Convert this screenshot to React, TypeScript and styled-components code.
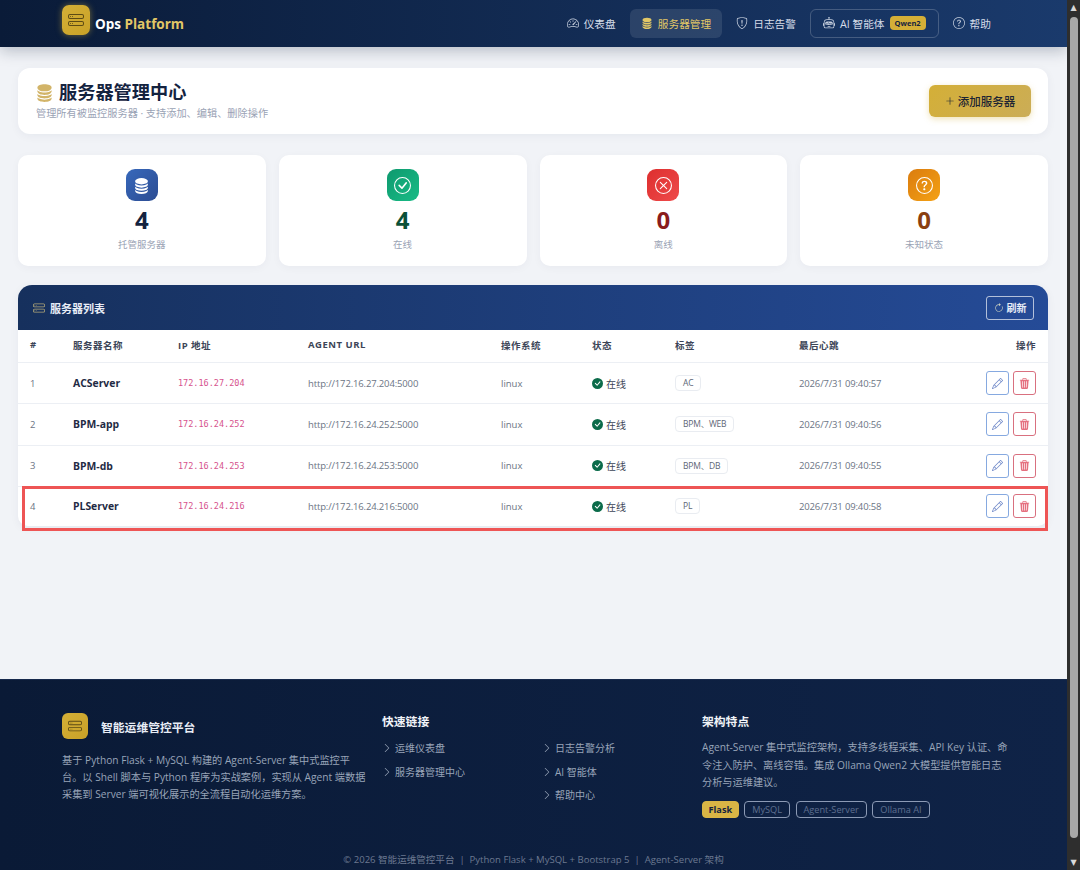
import React from "react";
import styled, { createGlobalStyle } from "styled-components";
import {
  BsArrowClockwise,
  BsCheckCircle,
  BsCheckCircleFill,
  BsChevronRight,
  BsDatabaseFill,
  BsHddStack,
  BsPencil,
  BsPlusLg,
  BsQuestionCircle,
  BsRobot,
  BsShieldExclamation,
  BsSpeedometer2,
  BsTrash3Fill,
  BsXCircle,
} from "react-icons/bs";

const FONT = `"Open Sans", "Noto Sans CJK SC", sans-serif`;

const stats = [
  { icon: <BsDatabaseFill />, bg: "linear-gradient(135deg, #2f62b8, #24468f)", color: "#14233f", value: 4, label: "托管服务器" },
  { icon: <BsCheckCircle />, bg: "linear-gradient(135deg, #059669, #10b981)", color: "#0b5138", value: 4, label: "在线" },
  { icon: <BsXCircle />, bg: "linear-gradient(135deg, #dc2626, #ef4444)", color: "#8a1c1c", value: 0, label: "离线" },
  { icon: <BsQuestionCircle />, bg: "linear-gradient(135deg, #d97706, #f59e0b)", color: "#8a3f10", value: 0, label: "未知状态" },
];

const servers = [
  { name: "ACServer", ip: "172.16.27.204", tag: "AC", time: "2026/7/31 09:40:57" },
  { name: "BPM-app", ip: "172.16.24.252", tag: "BPM、WEB", time: "2026/7/31 09:40:56" },
  { name: "BPM-db", ip: "172.16.24.253", tag: "BPM、DB", time: "2026/7/31 09:40:55" },
  { name: "PLServer", ip: "172.16.24.216", tag: "PL", time: "2026/7/31 09:40:58" },
];

const App = () => {
  return (
    <Shell>
      <GlobalStyle />
      <Page>
        <Navbar>
          <Brand>
            <LogoBox>
              <BsHddStack />
            </LogoBox>
            <BrandText>
              Ops <span>Platform</span>
            </BrandText>
          </Brand>
          <NavList>
            <NavItem>
              <BsSpeedometer2 /> 仪表盘
            </NavItem>
            <NavItem $active>
              <BsDatabaseFill /> 服务器管理
            </NavItem>
            <NavItem>
              <BsShieldExclamation /> 日志告警
            </NavItem>
            <NavItem $outlined>
              <BsRobot /> AI 智能体 <QwenBadge>Qwen2</QwenBadge>
            </NavItem>
            <NavItem>
              <BsQuestionCircle /> 帮助
            </NavItem>
          </NavList>
        </Navbar>

        <Main>
          <HeaderCard>
            <div>
              <PageTitle>
                <BsDatabaseFill /> 服务器管理中心
              </PageTitle>
              <PageSub>管理所有被监控服务器 · 支持添加、编辑、删除操作</PageSub>
            </div>
            <AddButton>
              <BsPlusLg /> 添加服务器
            </AddButton>
          </HeaderCard>

          <StatGrid>
            {stats.map((s) => (
              <StatCard key={s.label}>
                <StatIcon $bg={s.bg}>{s.icon}</StatIcon>
                <StatValue $color={s.color}>{s.value}</StatValue>
                <StatLabel>{s.label}</StatLabel>
              </StatCard>
            ))}
          </StatGrid>

          <TableCard>
            <TableHead>
              <TableTitle>
                <BsHddStack /> 服务器列表
              </TableTitle>
              <RefreshButton>
                <BsArrowClockwise /> 刷新
              </RefreshButton>
            </TableHead>
            <ColumnRow>
              <span>#</span>
              <span>服务器名称</span>
              <span>IP 地址</span>
              <span>AGENT URL</span>
              <span>操作系统</span>
              <span>状态</span>
              <span>标签</span>
              <span>最后心跳</span>
              <ActionHead>操作</ActionHead>
            </ColumnRow>
            {servers.map((s, i) => (
              <Row key={s.name} $last={i === servers.length - 1}>
                <Index>{i + 1}</Index>
                <ServerName>{s.name}</ServerName>
                <IpCode>{s.ip}</IpCode>
                <Numeric>http://{s.ip}:5000</Numeric>
                <Muted>linux</Muted>
                <Status>
                  <BsCheckCircleFill /> 在线
                </Status>
                <div>
                  <Tag>{s.tag}</Tag>
                </div>
                <Numeric>{s.time}</Numeric>
                <Actions>
                  <EditButton>
                    <BsPencil />
                  </EditButton>
                  <DeleteButton>
                    <BsTrash3Fill />
                  </DeleteButton>
                </Actions>
                {i === servers.length - 1 && <Highlight />}
              </Row>
            ))}
          </TableCard>
        </Main>

        <Footer>
          <FooterGrid>
            <div>
              <FooterBrand>
                <FooterLogo>
                  <BsHddStack />
                </FooterLogo>
                智能运维管控平台
              </FooterBrand>
              <FooterText>
                基于 Python Flask + MySQL 构建的 Agent-Server 集中式监控平
                <br />
                台。以 Shell 脚本与 Python 程序为实战案例，实现从 Agent 端数据
                <br />
                采集到 Server 端可视化展示的全流程自动化运维方案。
              </FooterText>
            </div>
            <div>
              <FooterHeading>快速链接</FooterHeading>
              <LinkGrid>
                <LinkColumn>
                  <FooterLink>
                    <BsChevronRight /> 运维仪表盘
                  </FooterLink>
                  <FooterLink>
                    <BsChevronRight /> 服务器管理中心
                  </FooterLink>
                </LinkColumn>
                <LinkColumn>
                  <FooterLink>
                    <BsChevronRight /> 日志告警分析
                  </FooterLink>
                  <FooterLink>
                    <BsChevronRight /> AI 智能体
                  </FooterLink>
                  <FooterLink>
                    <BsChevronRight /> 帮助中心
                  </FooterLink>
                </LinkColumn>
              </LinkGrid>
            </div>
            <div>
              <FooterHeading>架构特点</FooterHeading>
              <FeatureText>
                Agent-Server 集中式监控架构，支持多线程采集、API Key 认证、命
                <br />
                令注入防护、离线容错。集成 Ollama Qwen2 大模型提供智能日志
                <br />
                分析与运维建议。
              </FeatureText>
              <TechRow>
                <TechTag $solid>Flask</TechTag>
                <TechTag>MySQL</TechTag>
                <TechTag>Agent-Server</TechTag>
                <TechTag>Ollama AI</TechTag>
              </TechRow>
            </div>
          </FooterGrid>
          <Copyright>© 2026 智能运维管控平台 &nbsp;|&nbsp; Python Flask + MySQL + Bootstrap 5 &nbsp;|&nbsp; Agent-Server 架构</Copyright>
        </Footer>
      </Page>
      <Scrollbar>
        <ScrollArrow>▲</ScrollArrow>
        <ScrollThumb />
        <ScrollArrow>▼</ScrollArrow>
      </Scrollbar>
    </Shell>
  );
};

export default App;

const GlobalStyle = createGlobalStyle`
  html, body {
    margin: 0;
    padding: 0;
    height: 100%;
    overflow: hidden;
    background: #f1f3f7;
    font-family: ${FONT};
  }
`;

const Shell = styled.div`
  display: flex;
  width: 1080px;
  height: 870px;
  overflow: hidden;
`;

const Page = styled.div`
  width: 1067px;
  height: 870px;
  display: flex;
  flex-direction: column;
  overflow: hidden;
  background: #f1f3f7;
`;

const Navbar = styled.header`
  flex: none;
  height: 47px;
  box-sizing: border-box;
  padding: 0 65px 0 62px;
  display: flex;
  align-items: center;
  justify-content: space-between;
  background: linear-gradient(90deg, #0a1b38, #1a3a6c);
  box-shadow: 0 4px 14px rgba(10, 27, 56, 0.25);
  position: relative;
`;

const Brand = styled.div`
  display: flex;
  align-items: center;
  gap: 5px;
`;

const LogoBox = styled.div`
  width: 28px;
  height: 30px;
  margin-top: -7px;
  border-radius: 7px;
  background: linear-gradient(135deg, #d4af37, #c9a227);
  box-shadow: 0 0 6px rgba(212, 175, 55, 0.5);
  color: #5c4a14;
  display: flex;
  align-items: center;
  justify-content: center;
  font-size: 16px;
`;

const BrandText = styled.div`
  font-size: 13.5px;
  font-weight: 700;
  color: #fff;

  span {
    color: #e2c766;
  }
`;

const NavList = styled.nav`
  display: flex;
  align-items: center;
  gap: 3px;
  margin-top: -1px;
`;

const NavItem = styled.div<{ $active?: boolean; $outlined?: boolean }>`
  height: 29px;
  box-sizing: border-box;
  padding: 0 ${(p) => (p.$outlined ? "12px" : "10px")};
  display: flex;
  align-items: center;
  gap: 5px;
  border-radius: 6px;
  font-size: 10.7px;
  color: ${(p) => (p.$active ? "#e2c766" : "#d5dce8")};
  background: ${(p) => (p.$active ? "rgba(255, 255, 255, 0.1)" : "transparent")};
  border: 1px solid ${(p) => (p.$outlined ? "rgba(255, 255, 255, 0.2)" : "transparent")};

  svg {
    font-size: 12px;
    color: ${(p) => (p.$active ? "#e2c766" : "#c5cedd")};
  }
`;

const QwenBadge = styled.span`
  background: #d4af37;
  color: #14233f;
  font-size: 7.5px;
  font-weight: 700;
  padding: 2px 5px;
  border-radius: 4px;
`;

const Main = styled.main`
  flex: none;
  height: 632px;
  box-sizing: border-box;
  padding: 21px 19px 0 18px;
  display: flex;
  flex-direction: column;
`;

const HeaderCard = styled.section`
  flex: none;
  height: 66px;
  box-sizing: border-box;
  padding: 0 17px 2px 18px;
  background: #fff;
  border-radius: 12px;
  box-shadow: 0 2px 10px rgba(15, 35, 70, 0.05);
  display: flex;
  align-items: center;
  justify-content: space-between;
`;

const PageTitle = styled.h1`
  margin: 0 0 2px;
  display: flex;
  align-items: center;
  gap: 5px;
  font-size: 18.2px;
  line-height: 24px;
  font-weight: 700;
  color: #14233f;

  svg {
    color: #d2b468;
    font-size: 19px;
    margin-left: -1px;
  }
`;

const PageSub = styled.div`
  font-size: 10.2px;
  line-height: 14px;
  color: #9aa3b5;
`;

const AddButton = styled.button`
  width: 102px;
  height: 32px;
  margin-top: 2px;
  border: none;
  border-radius: 6px;
  background: linear-gradient(135deg, #d4af37, #cbad57);
  box-shadow: 0 2px 6px rgba(212, 175, 55, 0.35);
  color: #1c2433;
  font-family: ${FONT};
  font-size: 11.5px;
  font-weight: 500;
  display: flex;
  align-items: center;
  justify-content: center;
  gap: 3px;

  svg {
    font-size: 10px;
  }
`;

const StatGrid = styled.section`
  flex: none;
  margin-top: 21px;
  display: grid;
  grid-template-columns: repeat(4, 1fr);
  gap: 13px;
`;

const StatCard = styled.div`
  height: 111px;
  box-sizing: border-box;
  padding-top: 14px;
  background: #fff;
  border-radius: 10px;
  box-shadow: 0 2px 8px rgba(15, 35, 70, 0.04);
  display: flex;
  flex-direction: column;
  align-items: center;
`;

const StatIcon = styled.div<{ $bg: string }>`
  width: 32px;
  height: 32px;
  border-radius: 9px;
  background: ${(p) => p.$bg};
  color: #fff;
  opacity: 0.96;
  display: flex;
  align-items: center;
  justify-content: center;
  font-size: 17px;
`;

const StatValue = styled.div<{ $color: string }>`
  margin-top: 3px;
  font-size: 24px;
  line-height: 32px;
  font-weight: 700;
  color: ${(p) => p.$color};
`;

const StatLabel = styled.div`
  margin-top: 2px;
  font-size: 9.5px;
  line-height: 14px;
  color: #9aa3b5;
`;

const TableCard = styled.section`
  flex: none;
  margin-top: 19px;
  background: #fff;
  border-radius: 14px 14px 10px 10px;
  box-shadow: 0 2px 10px rgba(15, 35, 70, 0.05);
`;

const TableHead = styled.div`
  height: 45px;
  box-sizing: border-box;
  padding: 0 14px 0 15px;
  border-radius: 14px 14px 0 0;
  background: linear-gradient(90deg, #16305d, #254b97);
  display: flex;
  align-items: center;
  justify-content: space-between;
`;

const TableTitle = styled.div`
  display: flex;
  align-items: center;
  gap: 5px;
  font-size: 11px;
  font-weight: 700;
  color: #e8edf6;

  svg {
    font-size: 12px;
    color: #b3a878;
  }
`;

const RefreshButton = styled.button`
  width: 48px;
  height: 24px;
  padding: 0;
  border: 1px solid rgba(255, 255, 255, 0.65);
  border-radius: 3px;
  background: transparent;
  color: #e6ecf6;
  font-family: ${FONT};
  font-size: 10px;
  font-weight: 600;
  display: flex;
  align-items: center;
  justify-content: center;
  gap: 3px;

  svg {
    font-size: 10px;
    color: #c9cfc0;
  }
`;

const COLUMNS = "43px 105px 130px 193px 91px 83px 124px 1fr";

const ColumnRow = styled.div`
  height: 33px;
  box-sizing: border-box;
  padding: 0 12px 3px;
  display: grid;
  grid-template-columns: ${COLUMNS} auto;
  align-items: center;
  border-bottom: 1px solid #eceff4;
  font-size: 9.5px;
  font-weight: 700;
  letter-spacing: 0.5px;
  color: #3c4557;
`;

const ActionHead = styled.span`
  text-align: right;
`;

const Row = styled.div<{ $last?: boolean }>`
  position: relative;
  height: ${(p) => (p.$last ? "39px" : "41.33px")};
  box-sizing: border-box;
  padding: 0 12px;
  display: grid;
  grid-template-columns: ${COLUMNS} auto;
  align-items: center;
  border-bottom: ${(p) => (p.$last ? "none" : "1px solid #eceff4")};
  font-size: 9.5px;
`;

const Highlight = styled.div`
  position: absolute;
  left: 4px;
  right: 0;
  top: -1px;
  height: 45px;
  box-sizing: border-box;
  border: 3px solid #ee5555;
  pointer-events: none;
`;

const Index = styled.span`
  color: #6b7484;
`;

const ServerName = styled.span`
  font-size: 10.4px;
  font-weight: 700;
  color: #1f2b44;
`;

const IpCode = styled.code`
  font-family: "DejaVu Sans Mono", "Liberation Mono", monospace;
  font-size: 8.5px;
  color: #d6538e;
`;

const Muted = styled.span`
  color: #6b7484;
`;

const Numeric = styled(Muted)`
  letter-spacing: -0.15px;
`;

const Status = styled.span`
  display: flex;
  align-items: center;
  gap: 3px;
  font-size: 10px;
  color: #3c4557;

  svg {
    color: #0b6b4a;
    font-size: 11px;
  }
`;

const Tag = styled.span`
  display: inline-block;
  padding: 1px 7px;
  line-height: 12px;
  font-size: 8.5px;
  letter-spacing: -0.2px;
  color: #5d6676;
  background: #fff;
  border: 1px solid #e9ecf1;
  border-radius: 4px;
`;

const Actions = styled.div`
  display: flex;
  gap: 4px;
`;

const EditButton = styled.button`
  width: 23px;
  height: 24px;
  padding: 0;
  background: #fff;
  border: 1px solid #86a9e0;
  border-radius: 3px;
  color: #6f88c8;
  display: flex;
  align-items: center;
  justify-content: center;
  font-size: 11px;
`;

const DeleteButton = styled(EditButton)`
  border-color: #d9707f;
  color: #e5707f;
`;

const Footer = styled.footer`
  flex: none;
  height: 191px;
  box-sizing: border-box;
  padding: 33px 62px 0;
  background: linear-gradient(90deg, #0a1a36, #0f2347);
  border-top: 1px solid #16294c;
  overflow: hidden;
`;

const FooterGrid = styled.div`
  display: grid;
  grid-template-columns: 320px 320px 1fr;
  height: 140px;
`;

const FooterBrand = styled.div`
  display: flex;
  align-items: center;
  gap: 13px;
  font-size: 11.8px;
  font-weight: 700;
  color: #e8edf6;
`;

const FooterLogo = styled.div`
  width: 26px;
  height: 26px;
  border-radius: 6px;
  background: linear-gradient(135deg, #d4af37, #c9a227);
  color: #5c4a14;
  display: flex;
  align-items: center;
  justify-content: center;
  font-size: 14px;
`;

const FooterText = styled.p`
  margin: 13px 0 0;
  font-size: 10.2px;
  line-height: 17px;
  white-space: nowrap;
  color: #98a4b8;
`;

const FooterHeading = styled.div`
  margin-top: 1px;
  font-size: 11.8px;
  line-height: 15px;
  font-weight: 700;
  color: #f0f3f8;
`;

const LinkGrid = styled.div`
  display: grid;
  grid-template-columns: 160px 1fr;
  margin-top: 12px;
`;

const LinkColumn = styled.div`
  display: flex;
  flex-direction: column;
  gap: 9.5px;
`;

const FooterLink = styled.div`
  display: flex;
  align-items: center;
  gap: 3px;
  font-size: 10px;
  line-height: 14px;
  color: #98a4b8;

  svg {
    font-size: 10px;
  }
`;

const FeatureText = styled.p`
  margin: 10px 0 0;
  font-size: 10.2px;
  line-height: 17.5px;
  white-space: nowrap;
  color: #98a4b8;
`;

const TechRow = styled.div`
  display: flex;
  gap: 5.5px;
  margin-top: 9px;
`;

const TechTag = styled.span<{ $solid?: boolean }>`
  height: 17px;
  box-sizing: border-box;
  padding: 0 ${(p) => (p.$solid ? "5.5px" : "7px")};
  display: flex;
  align-items: center;
  border-radius: 4px;
  font-size: 9.2px;
  font-weight: ${(p) => (p.$solid ? 700 : 400)};
  color: ${(p) => (p.$solid ? "#14233f" : "#5f7090")};
  background: ${(p) => (p.$solid ? "#d9b545" : "transparent")};
  border: 1px solid ${(p) => (p.$solid ? "#d9b545" : "#8c9ab5")};
`;

const Copyright = styled.div`
  text-align: center;
  font-size: 9.55px;
  line-height: 14px;
  color: #6b7890;
`;

const Scrollbar = styled.div`
  width: 13px;
  height: 870px;
  background: #2e2e2e;
  display: flex;
  flex-direction: column;
  align-items: center;
`;

const ScrollArrow = styled.div`
  flex: none;
  height: 15px;
  line-height: 15px;
  font-size: 8px;
  color: #d8d8d8;
  font-family: "DejaVu Sans", sans-serif;
`;

const ScrollThumb = styled.div`
  flex: 1;
  width: 8px;
  margin: 2px 0 17px;
  border-radius: 4px;
  background: #a8a8a8;
`;
